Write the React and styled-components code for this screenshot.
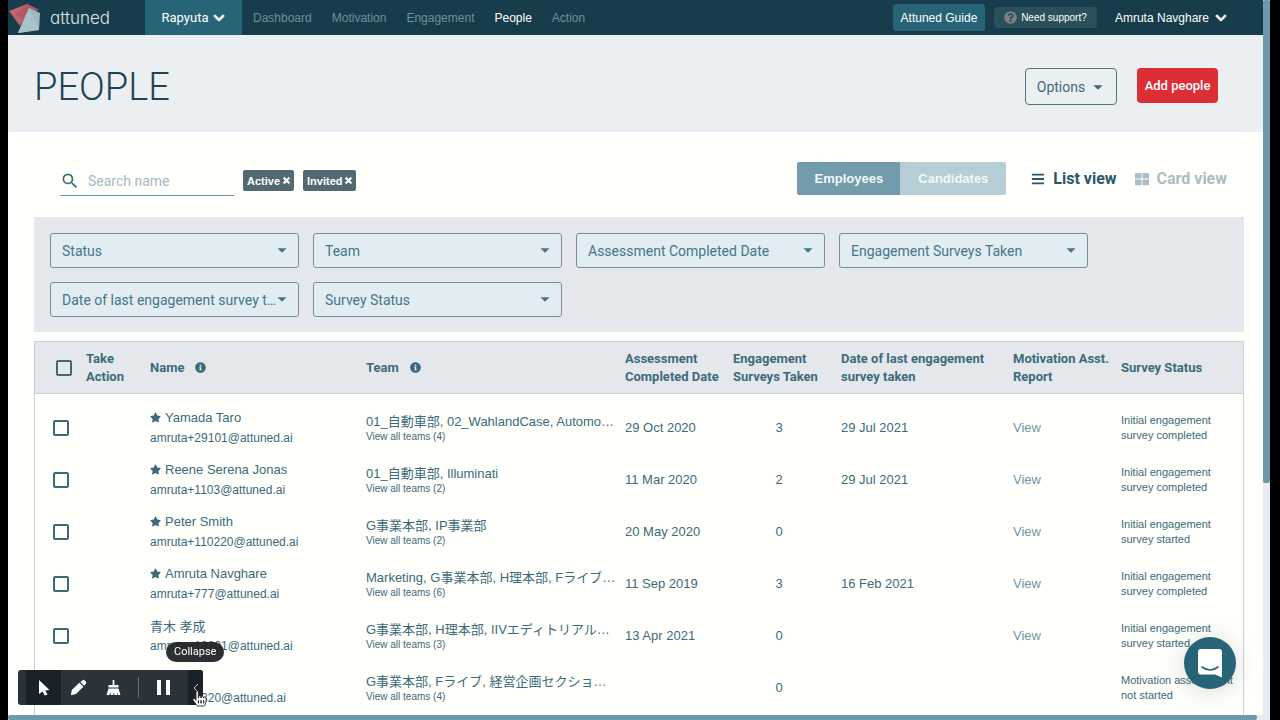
import { useState } from 'react';
import styled, { createGlobalStyle } from 'styled-components';
import { FaBars, FaChevronDown, FaHandPointer, FaInfoCircle, FaQuestionCircle, FaStar, FaThLarge, FaTimes } from 'react-icons/fa';
import { MdArrowDropDown, MdSearch } from 'react-icons/md';

const GlobalStyle = createGlobalStyle`
  *, *::before, *::after {
    box-sizing: border-box;
  }

  body {
    margin: 0;
    background: #000;
    color: #3b6a7b;
    font-family: 'Liberation Sans', 'Noto Sans CJK JP', sans-serif;
    font-size: 13px;
  }

  button, input, select {
    font: inherit;
    color: inherit;
    margin: 0;
  }

  a {
    color: inherit;
    text-decoration: none;
  }

  svg {
    display: block;
    flex-shrink: 0;
  }
`;

const Screen = styled.div`
  display: grid;
  grid-template-columns: minmax(0, 1fr) 7px;
  grid-template-rows: minmax(0, 1fr) 5px;
  height: 100vh;
  padding: 0 10px 0 8px;
  overflow: hidden;
`;

const Page = styled.div`
  background: #fffffc;
  overflow: hidden;
`;

const ScrollTrack = styled.div`
  background: #e6ecf1;
  grid-column: ${({ $horizontal }) => ($horizontal ? '1 / -1' : 'auto')};
`;

const ScrollThumb = styled.div`
  background: #6c9aaa;
  border-radius: 2px;
  width: ${({ $horizontal }) => ($horizontal ? '99%' : '100%')};
  height: ${({ $horizontal }) => ($horizontal ? '100%' : '67.5%')};
`;

const TopBar = styled.header`
  display: flex;
  align-items: center;
  height: 35px;
  padding-right: 36px;
  background: #173c4b;
  color: #fff;
  font-size: 12px;
`;

const Brand = styled.a`
  display: flex;
  align-items: center;
  gap: 9px;
  width: 137px;
  color: #dfe7ea;
  font-family: Inter, sans-serif;
  font-feature-settings: 'cv11';
  font-size: 17px;
  font-weight: 300;
`;

const Chevron = styled(FaChevronDown)`
  width: 12px;
  height: 12px;
  stroke: currentColor;
  stroke-width: 40px;
`;

const OrgButton = styled.button`
  display: flex;
  align-items: center;
  justify-content: center;
  gap: 5px;
  width: 97px;
  height: 100%;
  padding: 0;
  border: none;
  background: #276477;
  font-family: Roboto, sans-serif;
  font-size: 13px;
`;

const Nav = styled.nav`
  display: flex;
  gap: 20px;
  margin-left: 11px;
`;

const NavLink = styled.a`
  color: ${({ $active }) => ($active ? '#fff' : '#6d909c')};
`;

const TopActions = styled.div`
  display: flex;
  align-items: center;
  gap: 9px;
  margin-left: auto;
`;

const GuideButton = styled.button`
  width: 92px;
  height: 27px;
  padding: 0;
  border: none;
  border-radius: 3px;
  background: #276477;
`;

const SupportButton = styled.button`
  display: flex;
  align-items: center;
  justify-content: center;
  gap: 4px;
  width: 103px;
  height: 21px;
  padding: 0;
  border: none;
  border-radius: 4px;
  background: #2a505b;
  font-size: 10px;

  svg {
    color: #7c7f83;
  }
`;

const UserButton = styled.button`
  display: flex;
  align-items: center;
  gap: 6px;
  margin-left: 9px;
  padding: 0;
  border: none;
  background: none;
`;

const Hero = styled.div`
  display: flex;
  align-items: center;
  justify-content: space-between;
  height: 97px;
  padding: 6px 45px 0 26px;
  background: #ebeff2;

  h1 {
    margin: 0;
    color: #1c4454;
    font-family: Roboto, sans-serif;
    font-size: 38px;
    font-weight: 300;
  }
`;

const HeroActions = styled.div`
  display: flex;
  align-items: flex-start;
  gap: 20px;
`;

const OptionsButton = styled.button`
  display: flex;
  align-items: center;
  justify-content: center;
  gap: 2px;
  width: 92px;
  height: 37px;
  padding: 0 0 0 4px;
  border: 1px solid #4a7484;
  border-radius: 4px;
  background: transparent;
  font-family: Roboto, sans-serif;
  font-size: 14px;
`;

const AddButton = styled.button`
  width: 81px;
  height: 35px;
  padding: 0;
  border: none;
  border-radius: 4px;
  background: #dd2e35;
  color: #fff;
  font-family: Roboto, sans-serif;
  font-size: 13px;
  font-weight: 500;
`;

const Toolbar = styled.div`
  display: flex;
  align-items: center;
  justify-content: space-between;
  height: 85px;
  padding: 8px 36px 0 52px;
`;

const SearchGroup = styled.div`
  display: flex;
  align-items: center;
  gap: 9px;
  padding-top: 4px;
`;

const ViewGroup = styled.div`
  display: flex;
  align-items: center;
`;

const SearchField = styled.label`
  display: flex;
  align-items: center;
  gap: 8px;
  width: 174px;
  height: 30px;
  padding-top: 2px;
  border-bottom: 1px solid #6c9aaa;

  input {
    width: 100%;
    padding: 0;
    border: none;
    outline: none;
    background: none;
    font-family: Roboto, sans-serif;
    font-size: 14px;
  }

  input::placeholder {
    color: #a3bac5;
    opacity: 1;
  }
`;

const Tag = styled.button`
  display: flex;
  align-items: center;
  gap: 2px;
  height: 21px;
  padding: 0 3px 0 4px;
  border: none;
  border-radius: 2px;
  background: #526972;
  color: #fff;
  font-size: 11px;
  font-weight: 700;

  svg {
    stroke: currentColor;
    stroke-width: 50px;
  }
`;

const Segment = styled.button`
  width: ${({ $active }) => ($active ? '103px' : '106px')};
  height: 33px;
  padding: 0;
  border: none;
  border-radius: ${({ $active }) => ($active ? '2px 0 0 2px' : '0 2px 2px 0')};
  background: ${({ $active }) => ($active ? '#729bac' : '#b5cdd4')};
  color: #f4f8f9;
  font-size: 13px;
  font-weight: 700;
`;

const ViewButton = styled.button`
  display: flex;
  align-items: center;
  gap: 8px;
  margin-left: ${({ $active }) => ($active ? '25px' : '18px')};
  padding: 0;
  border: none;
  background: none;
  color: ${({ $active }) => ($active ? '#29586b' : '#a9bdc6')};
  font-family: Roboto, sans-serif;
  font-size: 16px;
  font-weight: 700;
`;

const Filters = styled.section`
  display: flex;
  flex-wrap: wrap;
  gap: 14px;
  margin: 0 19px 9px 26px;
  padding: 16px 16px 15px;
  background: #e4e8ed;
`;

const SelectBox = styled.div`
  position: relative;
  width: 249px;
  color: #467587;

  select {
    width: 100%;
    height: 35px;
    padding: 0 16px 0 11px;
    border: 1px solid #748f99;
    border-radius: 3px;
    background: #e2edf3;
    appearance: none;
    font-family: Roboto, sans-serif;
    font-size: 14px;
    text-overflow: ellipsis;
  }

  svg {
    position: absolute;
    top: 6px;
    right: 6px;
    pointer-events: none;
  }
`;

const TableFrame = styled.div`
  margin: 0 19px 0 26px;
  padding-bottom: 24px;
  border: 1px solid #c6d0d7;
`;

const PeopleTable = styled.table`
  width: 100%;
  table-layout: fixed;
  border-collapse: collapse;

  th, td {
    padding: 0;
    text-align: left;
    vertical-align: middle;
  }

  thead th {
    height: 51px;
    padding-top: 1px;
    border-bottom: 1px solid #c6d0d7;
    background: #e4e8ed;
    font-family: Roboto, sans-serif;
    font-size: 13px;
    font-weight: 700;
    line-height: 18px;
  }

  tbody::before {
    content: '';
    display: block;
    height: 8px;
  }

  td {
    height: 52px;
  }
`;

const HeadLabel = styled.span`
  display: flex;
  align-items: center;
  gap: 11px;
`;

const Checkbox = styled.input`
  display: block;
  width: 16px;
  height: 16px;
  margin: 0 0 0 ${({ $head }) => ($head ? '21px' : '18px')};
  border: 2px solid #3b6a7b;
  border-radius: 2px;
  appearance: none;

  &:checked {
    background: #3b6a7b;
  }
`;

const PersonName = styled.div`
  display: flex;
  align-items: center;
  gap: 4px;
  height: 20px;
`;

const Email = styled.div`
  font-size: 12px;
  line-height: 20px;
`;

const Teams = styled.div`
  padding-top: 2px;
  overflow: hidden;
  line-height: 16px;
  text-overflow: ellipsis;
  white-space: nowrap;
`;

const TeamsLink = styled.a`
  display: block;
  font-size: 10px;
  line-height: 14px;
`;

const Count = styled.div`
  width: 92px;
  text-align: center;
`;

const ReportLink = styled.a`
  color: #6f97a6;
`;

const Status = styled.div`
  font-size: 11px;
  line-height: 15px;
`;

const Recorder = styled.div`
  position: fixed;
  bottom: 15px;
  left: 18px;
  display: flex;
  height: 35px;
  padding-left: 8px;
  border-radius: 3px;
  background: #2c3338;
`;

const Tool = styled.button`
  display: flex;
  align-items: center;
  justify-content: center;
  width: ${({ $wide }) => ($wide ? '49px' : '35px')};
  padding: 0;
  border: none;
  background: ${({ $active }) => ($active ? '#1a2228' : 'transparent')};
  color: #fff;
`;

const ToolDivider = styled.span`
  align-self: center;
  width: 1px;
  height: 21px;
  margin-left: 7px;
  background: #687075;
`;

const CollapseButton = styled(Tool)`
  width: 15px;
  border-radius: 0 3px 3px 0;
  background: #1a2228;
`;

const Tooltip = styled.div`
  position: fixed;
  bottom: 58px;
  left: 166px;
  padding: 3px 8px;
  border-radius: 10px;
  background: rgba(26, 32, 37, 0.93);
  color: #fff;
  font-family: Roboto, sans-serif;
  font-size: 11px;
  line-height: 14px;
`;

const HandCursor = styled(FaHandPointer)`
  position: fixed;
  bottom: 14px;
  left: 192px;
  overflow: visible;
  fill: #fff;
  stroke: #222;
  stroke-width: 30px;
`;

const ChatButton = styled.button`
  position: fixed;
  right: 44px;
  bottom: 31px;
  display: flex;
  align-items: center;
  justify-content: center;
  width: 52px;
  height: 52px;
  padding: 0;
  border: none;
  border-radius: 50%;
  background: #286478;
  box-shadow: 0 2px 24px rgba(0, 0, 0, 0.16);
`;

const navItems = ['Dashboard', 'Motivation', 'Engagement', 'People', 'Action'];

const filters = [
  'Status',
  'Team',
  'Assessment Completed Date',
  'Engagement Surveys Taken',
  'Date of last engagement survey taken',
  'Survey Status',
];

// one entry per column, the last one takes the rest of the table
const columns = [51, 64, 216, 259, 108, 108, 172, 108];

const people = [
  { name: 'Yamada Taro', starred: true, email: 'amruta+29101@attuned.ai', teams: '01_自動車部, 02_WahlandCase, Automo…', teamCount: 4, assessed: '29 Oct 2020', surveys: 3, lastSurvey: '29 Jul 2021', report: true, status: ['Initial engagement', 'survey completed'] },
  { name: 'Reene Serena Jonas', starred: true, email: 'amruta+1103@attuned.ai', teams: '01_自動車部, Illuminati', teamCount: 2, assessed: '11 Mar 2020', surveys: 2, lastSurvey: '29 Jul 2021', report: true, status: ['Initial engagement', 'survey completed'] },
  { name: 'Peter Smith', starred: true, email: 'amruta+110220@attuned.ai', teams: 'G事業本部, IP事業部', teamCount: 2, assessed: '20 May 2020', surveys: 0, report: true, status: ['Initial engagement', 'survey started'] },
  { name: 'Amruta Navghare', starred: true, email: 'amruta+777@attuned.ai', teams: 'Marketing, G事業本部, H理本部, Fライブ…', teamCount: 6, assessed: '11 Sep 2019', surveys: 3, lastSurvey: '16 Feb 2021', report: true, status: ['Initial engagement', 'survey completed'] },
  { name: '青木 孝成', email: 'amruta+13201@attuned.ai', teams: 'G事業本部, H理本部, IIVエディトリアル…', teamCount: 3, assessed: '13 Apr 2021', surveys: 0, report: true, status: ['Initial engagement', 'survey started'] },
  { name: '', email: 'amruta+1320@attuned.ai', teams: 'G事業本部, Fライブ, 経営企画セクショ…', teamCount: 4, surveys: 0, status: ['Motivation assessment', 'not started'] },
];

function LogoMark() {
  return (
    <svg width='33' height='32' viewBox='0 0 33 32' aria-hidden='true'>
      <path d='M1 9 L19 2 L31 8 L20 10 L12 24 Z' fill='#c0646c' />
      <path d='M19 2 L31 8 L20 10 L15 18 L8 12 Z' fill='#b25862' />
      <path d='M21 6 L32 11 L31 28 L10 31 Z' fill='#9dbac3' />
      <path d='M21 6 L31 28 L10 31 Z' fill='#a9c3ca' />
    </svg>
  );
}

function ArrowIcon() {
  return (
    <svg width='12' height='17' viewBox='0 0 12 17' aria-hidden='true'>
      <path d='M1 1 L11.5 11 L7.2 11.4 L9.6 15.4 L6.7 16.6 L4.6 12.4 L1 15 Z' fill='currentColor' />
    </svg>
  );
}

function PencilIcon() {
  return (
    <svg width='17' height='17' viewBox='0 0 17 17' aria-hidden='true'>
      <path d='M.8 16.2 L1.8 11 L9.4 3.8 L13.4 7.8 L6 15 Z' fill='currentColor' />
      <path d='M10.4 3 L12.4 1.2 Q13.7 .3 14.8 1.4 L15.8 2.4 Q16.8 3.5 15.8 4.8 L14.2 6.8 Z' fill='currentColor' />
    </svg>
  );
}

function BroomIcon() {
  return (
    <svg width='15' height='17' viewBox='0 0 15 17' aria-hidden='true'>
      <path d='M6.6 1 H8.4 V6 H12.5 V8.5 H2.5 V6 H6.6 Z' fill='currentColor' />
      <path d='M2.5 9.5 H12.5 L14.5 16 H11.8 L11 13.5 V16 H8.4 L8 13.5 L7 16 H4.8 L5 13.5 L3.4 16 H.5 Z' fill='currentColor' />
    </svg>
  );
}

function PauseIcon() {
  return (
    <svg width='14' height='15' viewBox='0 0 14 15' aria-hidden='true'>
      <path d='M0 0 H4 V15 H0 Z M9 0 H13 V15 H9 Z' fill='currentColor' />
    </svg>
  );
}

function ChatIcon() {
  return (
    <svg width='26' height='29' viewBox='0 0 26 29' aria-hidden='true'>
      <path d='M4 0 H22 Q25 0 25 3 V28.5 L18 25.5 H4 Q1 25.5 1 22.5 V3 Q1 0 4 0 Z' fill='#fff' />
      <path d='M5 18 Q13 24 21 18' fill='none' stroke='#286478' strokeWidth='1.6' strokeLinecap='round' />
    </svg>
  );
}

function PersonRow({ person }) {
  return (
    <tr>
      <td>
        <Checkbox type='checkbox' aria-label={`Select ${person.email}`} />
      </td>
      <td />
      <td>
        <PersonName>
          {person.starred && <FaStar size={11} />}
          {person.name}
        </PersonName>
        <Email>{person.email}</Email>
      </td>
      <td>
        <Teams>{person.teams}</Teams>
        <TeamsLink href='#teams'>View all teams ({person.teamCount})</TeamsLink>
      </td>
      <td>{person.assessed}</td>
      <td>
        <Count>{person.surveys}</Count>
      </td>
      <td>{person.lastSurvey}</td>
      <td>{person.report && <ReportLink href='#report'>View</ReportLink>}</td>
      <td>
        <Status>
          {person.status[0]}
          <br />
          {person.status[1]}
        </Status>
      </td>
    </tr>
  );
}

export default function App() {
  const [search, setSearch] = useState('');

  return (
    <>
      <GlobalStyle />
      <Screen>
        <Page>
          <TopBar>
            <Brand href='#home'>
              <LogoMark />
              attuned
            </Brand>
            <OrgButton>
              Rapyuta <Chevron />
            </OrgButton>
            <Nav>
              {navItems.map((item) => (
                <NavLink key={item} href={`#${item.toLowerCase()}`} $active={item === 'People'}>
                  {item}
                </NavLink>
              ))}
            </Nav>
            <TopActions>
              <GuideButton>Attuned Guide</GuideButton>
              <SupportButton>
                <FaQuestionCircle size={13} />
                Need support?
              </SupportButton>
              <UserButton>
                Amruta Navghare <Chevron />
              </UserButton>
            </TopActions>
          </TopBar>

          <Hero>
            <h1>PEOPLE</h1>
            <HeroActions>
              <OptionsButton>
                Options <MdArrowDropDown size={22} />
              </OptionsButton>
              <AddButton>Add people</AddButton>
            </HeroActions>
          </Hero>

          <Toolbar>
            <SearchGroup>
              <SearchField>
                <MdSearch size={20} />
                <input type='text' placeholder='Search name' aria-label='Search name' value={search} onChange={(e) => setSearch(e.target.value)} />
              </SearchField>
              <Tag>
                Active <FaTimes size={9} />
              </Tag>
              <Tag>
                Invited <FaTimes size={9} />
              </Tag>
            </SearchGroup>
            <ViewGroup>
              <Segment $active>Employees</Segment>
              <Segment>Candidates</Segment>
              <ViewButton $active>
                <FaBars size={14} /> List view
              </ViewButton>
              <ViewButton>
                <FaThLarge size={14} /> Card view
              </ViewButton>
            </ViewGroup>
          </Toolbar>

          <Filters>
            {filters.map((label) => (
              <SelectBox key={label}>
                <select aria-label={label}>
                  <option>{label}</option>
                </select>
                <MdArrowDropDown size={22} />
              </SelectBox>
            ))}
          </Filters>

          <TableFrame>
            <PeopleTable>
              <colgroup>
                {columns.map((width, i) => (
                  <col key={i} width={width} />
                ))}
                <col />
              </colgroup>
              <thead>
                <tr>
                  <th>
                    <Checkbox type='checkbox' $head aria-label='Select all' />
                  </th>
                  <th>
                    Take
                    <br />
                    Action
                  </th>
                  <th>
                    <HeadLabel>
                      Name <FaInfoCircle size={11} />
                    </HeadLabel>
                  </th>
                  <th>
                    <HeadLabel>
                      Team <FaInfoCircle size={11} />
                    </HeadLabel>
                  </th>
                  <th>
                    Assessment
                    <br />
                    Completed Date
                  </th>
                  <th>
                    Engagement
                    <br />
                    Surveys Taken
                  </th>
                  <th>
                    Date of last engagement
                    <br />
                    survey taken
                  </th>
                  <th>
                    Motivation Asst.
                    <br />
                    Report
                  </th>
                  <th>Survey Status</th>
                </tr>
              </thead>
              <tbody>
                {people.map((person) => (
                  <PersonRow key={person.email} person={person} />
                ))}
              </tbody>
            </PeopleTable>
          </TableFrame>
        </Page>
        <ScrollTrack>
          <ScrollThumb />
        </ScrollTrack>
        <ScrollTrack $horizontal>
          <ScrollThumb $horizontal />
        </ScrollTrack>
      </Screen>

      <Tooltip role='tooltip'>Collapse</Tooltip>
      <Recorder>
        <Tool $active aria-label='Pointer'>
          <ArrowIcon />
        </Tool>
        <Tool aria-label='Draw'>
          <PencilIcon />
        </Tool>
        <Tool aria-label='Clear'>
          <BroomIcon />
        </Tool>
        <ToolDivider />
        <Tool $wide aria-label='Pause'>
          <PauseIcon />
        </Tool>
        <CollapseButton aria-label='Collapse'>
          <svg width='6' height='10' viewBox='0 0 6 10' aria-hidden='true'>
            <path d='M5 1 L1 5 L5 9' fill='none' stroke='#c9ced1' />
          </svg>
        </CollapseButton>
      </Recorder>
      <HandCursor size={15} />
      <ChatButton aria-label='Open chat'>
        <ChatIcon />
      </ChatButton>
    </>
  );
}
